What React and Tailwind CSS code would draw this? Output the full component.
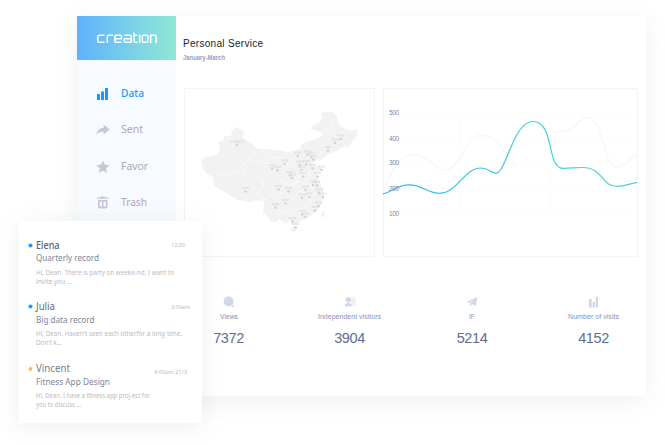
const nav = [
  { label: "Data", icon: "data", width: 23 },
  { label: "Sent", icon: "sent", width: 22 },
  { label: "Favor", icon: "favor", width: 27 },
  { label: "Trash", icon: "trash", width: 26 },
];

function NavIcon({ name }) {
  return (
    <svg viewBox="0 0 14 14" className="block h-3.5 w-3.5 shrink-0" fill={name === "data" ? "#189aff" : "#c9c6d9"}>
      {name === "data" && <path d="M1 7h3v6H1zM5 4.500h3V13H5zM9 1h3v12H9z" />}
      {name === "sent" && <path d="M7.600 1.500 13.700 6.500l-6.100 5V8.800C4.800 8.700 2.800 9.300.5 11.500 1 7.800 3.600 5 7.600 4.700z" />}
      {name === "favor" && <path d="m6.900.6 1.900 4.100 4.600.5-3.400 3.100 1 4.600-4.100-2.400-4 2.400 1-4.600L.5 5.200 5.100 4.700z" />}
      {name === "trash" && (
        <path
          fillRule="evenodd"
          d="M1 1.500h3.500V.5h4.500v1h3.400v1.300H1zM2 4h9.500v6.500a2 2 0 0 1-2 2H4a2 2 0 0 1-2-2zM3.700 5.800v4.600h2.300V5.800zm3.800 0v4.600h2.300V5.800z"
        />
      )}
    </svg>
  );
}

function Logo() {
  return (
    <svg role="img" aria-label="creation" viewBox="0 0 60 14" className="block h-3.5 w-[60px]" fill="none" stroke="#fff" strokeWidth="1.500">
      <path d="M7.500 4.200H2Q.800 4.200.800 5.400V10Q.800 11.300 2 11.300H7.500M10.300 12V5.400Q10.300 4.200 11.500 4.200H16M18 7.800H24.500V5.400Q24.500 4.200 23.300 4.200H19Q17.800 4.200 17.800 5.400V10Q17.800 11.300 19 11.300H24.500M27.500 4.200H33Q34.200 4.200 34.200 5.400V11.300H28.500Q27.300 11.300 27.300 10V7.800H34M37 1.500V10Q37 11.300 38.200 11.300H40.500M37 4.200H40.500M42.700 3.500V12M46.500 4.200H50Q51 4.200 51 5.400V10Q51 11.300 50 11.300H46.500Q45.300 11.300 45.300 10V5.400Q45.300 4.200 46.500 4.200M53.700 12V4.200H58Q59.200 4.200 59.200 5.400V12" />
    </svg>
  );
}

const cities = [
  [237, 145], [245.5, 191.5], [272, 168.5], [277.5, 170.5], [284.5, 163.8], [290, 175.5], [292, 178],
  [278.5, 189.5], [288.5, 191.5], [275.5, 207.7], [285.5, 203.5], [297.7, 156], [307.5, 154.8],
  [311, 157], [313.5, 159.6], [300, 165], [306, 164.5], [301.5, 170], [312.5, 168.5], [321.5, 170],
  [303, 176.5], [317.5, 176.5], [313, 185], [317, 185.5], [305.5, 190], [302, 198], [309.5, 197],
  [319, 193], [323, 197], [318.5, 206], [315, 210.5], [302, 214.5], [305.5, 217], [292.5, 221.5],
  [295.5, 227.5], [328, 150.5], [335, 143], [340.5, 139],
];

function ChinaMap() {
  return (
    <svg viewBox="185 89 189 167" className="block h-full w-full">
      <g fill="#f2f2f2">
        <path d="M201 159 205 157 216 155 220 150 219 146 218 142 224 140 224 136 231 136 232 131 235 127 240 129 244 132 243 138 252 144 256 148 263 149 277 150 288 152 300 149 302 144 309 141 317 139 322 135 322 132 310 129 314 125 319 123 322 118 321 113 326 112 333 112 337 116 338 124 344 128 351 131 358 129 356 137 352 141 350 146 342 147 337 151 329 154 323 158 320 161 317 159 313 163 314 166 322 167 320 171 316 173 319 181 323 189 324 197 321 205 316 212 307 218 300 221 297 225 290 220 285 223 279 219 277 222 271 222 267 216 263 213 264 202 258 200 250 202 237 200 228 194 221 190 214 185 213 177 207 174 203 169Z" />
        <path d="m291 229 3-3 4 1-3 5-4-1ZM323 210l2 3-2 5-2-2Z" />
      </g>
      <g fill="none" stroke="#fafafa" strokeWidth=".8">
        <path d="m217 176 10-2 12-2 4 3 3-9-2-3 9-8 10-4M246 166l5 4 11 8 2 9-7 7 7 8M251 161l12 0 10 4 6-5 7 3 7-3 6-6M263 149l9 8 9 1 7 7-5 7 7 5M263 201l9-7 8 2 4-10 13-2 3-9 11-2M280 180l10 5 8-4 8 3 5-10M294 220l-2-9-12 1-8-6M299 218l2-10 9-4 4-14-5-8M324 192l-13 3-11-4-6 7-9 3M323 135l5-6 7 1-5-7 5-7M327 132l9 5 8-5" />
      </g>
      <path d="M237 145 258 185 275 208" fill="none" stroke="#e9e9e9" strokeWidth=".5" />
      {cities.map(([x, y], i) => (
        <g key={i}>
          <path d={`M${x - 3.5} ${y - 3.5}h7`} stroke="#dcdcdc" strokeWidth="2.200" strokeDasharray="1.900 .6" opacity=".75" />
          <circle cx={x} cy={y} r="1.300" fill="#d2d2d2" />
        </g>
      ))}
      <path d="M230 141.500h14" stroke="#dedede" strokeWidth="2" strokeDasharray="2 1" opacity=".7" />
    </svg>
  );
}

function Chart() {
  return (
    <svg viewBox="384 89 253 167" className="block h-full w-full overflow-visible">
      <defs>
        <linearGradient id="line" gradientUnits="userSpaceOnUse" x1="383" y1="0" x2="560" y2="0">
          <stop offset="0" stopColor="#3bb3e9" />
          <stop offset="1" stopColor="#4ad3d0" />
        </linearGradient>
      </defs>
      <path d="M401 113.500H637M401 138H637M401 163.500H637M401 188.500H637M401 213.500H637M459.500 113V213M550.500 113V213" stroke="#fafbfd" />
      <path d="M385 189C393 165 401 155 415 155C431 155 433 170 444 170C462 170 464 135 482 135C496 135 505 154 517 167M550 133C563 131 570 131 576 125C585 114 593 114 600 133C607 151 607 167 617 167C624 167 629 160 637 154" fill="none" stroke="#f5f8fd" strokeWidth="1.600" />
      <g className="font-['Liberation_Sans']" fill="#7787aa" fontSize="6.500" textAnchor="end">
        <text x="399" y="115.300" textLength="10">500</text>
        <text x="399" y="141.300" textLength="10">400</text>
        <text x="399" y="165.300" textLength="10">300</text>
        <text x="399" y="191.300" textLength="10">200</text>
        <text x="399" y="216.300" textLength="10">100</text>
      </g>
      <path d="M383 193.800C392 192 397 184.800 409 184.800C423 184.800 427 193.300 440 193.300C457 193.300 464 168 481 168C489 168 491 173.300 496 173.300C506 173.300 513 121.500 533 121.500C555 121.500 546 168 563 168.300C570 168.300 575 167.500 583 167.500C603 167.500 601 186.300 617 186.300C624 186.300 630 183.500 637 182.300" fill="none" stroke="url(#line)" strokeWidth="1.200" />
    </svg>
  );
}

function StatIcon({ name }) {
  return (
    <svg viewBox="0 0 12 12" className="block h-3 w-3" fill="#cfd6e7">
      {name === "views" && (
        <>
          <circle cx="5.500" cy="5.500" r="4.900" />
          <path d="m8.500 8.500 2.300 2.500" stroke="#cfd6e7" strokeWidth="1.200" />
          <path d="M3 5q.300-2 2.200-2.400" stroke="#e8edf5" fill="none" strokeWidth=".7" />
        </>
      )}
      {name === "visitors" && (
        <>
          <path d="M6.500 1H11.500V10H7z" fill="#eef1f7" />
          <path d="M8.500 3.500h2M8.500 5.500h2" stroke="#dce1ed" strokeWidth=".7" />
          <circle cx="4.200" cy="3.800" r="2.600" />
          <path d="M.5 10.200q.5-2.800 2.800-3.200h2q2.300.5 2.800 3.200z" />
        </>
      )}
      {name === "ip" && <path d="m.5 6 11-5-2 9-3.200-2-1.800 2.500-.3-3.500L9 3.500 3.200 6.800z" />}
      {name === "visits" && <path d="M1 3h2.700v8.500H1zM4.700 6h2.300v5.500H4.700zM7.800.800h2.200v10.700H7.800z" />}
    </svg>
  );
}

const stats = [
  { icon: "views", label: "Views", labelWidth: 18, value: "7372", column: "w-[106px]" },
  { icon: "visitors", label: "Independent visitors", labelWidth: 63, value: "3904", column: "w-[136px]" },
  { icon: "ip", label: "IP", labelWidth: 5.5, value: "5214", column: "w-[109px]" },
  { icon: "visits", label: "Number of visits", labelWidth: 51, value: "4152", column: "w-[134px]" },
];

function Line({ children, width, className }) {
  return (
    <svg className={`block overflow-visible ${className}`} width={width} height="10">
      <text x="0" y="8" textLength={width} lengthAdjust="spacingAndGlyphs" fill="currentColor">{children}</text>
    </svg>
  );
}

function Message({ name, nameWidth, time, timeWidth, title, titleWidth, titleClass, lines, star, className, nameClass, timeClass }) {
  return (
    <article className={`pl-[16.500px] font-['Noto_Sans'] ${className}`}>
      <div className="relative flex h-[13px]">
        <svg viewBox="0 0 6 6" className="absolute top-[2px] -left-[7.500px] h-[5px] w-[5px]">
          {star ? <path d="m3 0 1 2h2L4.500 3.500 5 6 3 5 1 6l.5-2.500L0 2h2z" fill="#ffb53d" /> : <circle cx="3" cy="3" r="2.400" fill="#189aff" />}
        </svg>
        <Line width={nameWidth} className={nameClass}>{name}</Line>
        <div className={`absolute ${timeClass}`}>
          <Line width={timeWidth} className="text-[5.500px] text-[#b9bbc6]">{time}</Line>
        </div>
      </div>
      <div className={titleClass}>
        <Line width={titleWidth} className="text-[9.500px] text-[#7d8497]">{title}</Line>
      </div>
      {lines.map(([text, width]) => (
        <div key={text} className="h-[9px]">
          <Line width={width} className="text-[6.500px] text-[#b9bac3]">{text}</Line>
        </div>
      ))}
    </article>
  );
}

export default function App() {
  return (
    <main className="relative h-[445px] w-[665px] overflow-hidden bg-white pt-4 pl-[77px] font-['Liberation_Sans',sans-serif]">
      <div className="flex h-[379.500px] w-[569px] bg-white shadow-[0_4px_24px_rgba(70,110,90,0.09)]">
        <aside className="w-[99px] shrink-0 bg-[#f7faff]">
          <div className="flex h-11 items-center justify-center bg-linear-to-r from-[#5eb1fc] to-[#91e8d4]">
            <Logo />
          </div>
          <nav className="flex flex-col pt-4 pl-[19px] font-['Noto_Sans']">
            {nav.map((item, i) => (
              <div key={item.label} className={`flex h-[36.300px] items-center gap-[10.500px] ${i === 0 ? "text-[#189aff]" : "text-[#aaa8bc]"}`}>
                <NavIcon name={item.icon} />
                <Line width={item.width} className={`text-[11.500px] ${i === 0 ? "font-medium" : ""}`}>{item.label}</Line>
              </div>
            ))}
          </nav>
        </aside>
        <section className="min-w-0 flex-1 pl-[7px]">
          <header className="h-[72px] pt-[22px]">
            <h1 className="h-[15px] text-[10px] leading-[12px] tracking-[0.3px] text-[#222]">Personal Service</h1>
            <Line width={42} className="-mt-[1.500px] text-[6.500px] font-bold text-[#93a1c0]">January-March</Line>
          </header>
          <div className="flex gap-2">
            <div className="ml-px h-[169px] w-[191px] border border-[#f1f4f9]">
              <ChinaMap />
            </div>
            <div className="h-[169px] w-[255px] border border-[#f1f4f9]">
              <Chart />
            </div>
          </div>
          <div className="mt-[39px] -ml-[7.500px] flex">
            {stats.map((s) => (
              <div key={s.icon} className={`flex shrink-0 flex-col items-center ${s.column}`}>
                <StatIcon name={s.icon} />
                <Line width={s.labelWidth} className="mt-[3px] text-[7px] text-[#8493ba]">{s.label}</Line>
                <strong className="mt-[10px] text-[14.500px] leading-[15px] font-normal tracking-[-0.4px] text-[#5d6e94]">{s.value}</strong>
              </div>
            ))}
          </div>
        </section>
      </div>
      <section className="absolute top-[221px] left-[19px] h-[202px] w-[183px] bg-white pt-5 shadow-[0_4px_24px_rgba(70,110,90,0.10)]">
        <Message className="h-[61px]" name="Elena" nameWidth={23.5} nameClass="text-[10px] font-medium text-[#5c6478]" time="12:00" timeWidth={14} timeClass="left-[135px] -top-[2px]" title="Quarterly record" titleWidth={63} titleClass="-mt-[0.700px] h-[13.500px]" lines={[["Hi, Dean. There is party on weeke-nd, I want to", 138], ["invite you ...", 36]]} />
        <Message className="h-[62px]" name="Julia" nameWidth={19} nameClass="text-[10px] text-[#646c80]" time="3:00am" timeWidth={19} timeClass="left-[135px] -top-px" title="Big data record" titleWidth={58.5} titleClass="h-[12.700px]" lines={[["Hi, Dean. Haven't seen each otherfor a long time.", 146], ["Don't k...", 26]]} />
        <Message className="h-[59px]" star name="Vincent" nameWidth={34} nameClass="text-[11px] text-[#747b8f]" time="4:00pm 21/3" timeWidth={33} timeClass="left-[118px] top-[2px]" title="Fitness App Design" titleWidth={74} titleClass="h-[13px]" lines={[["Hi, Dean. I have a fitness app proj-ect for", 114], ["you to discuss ...", 45]]} />
      </section>
    </main>
  );
}
